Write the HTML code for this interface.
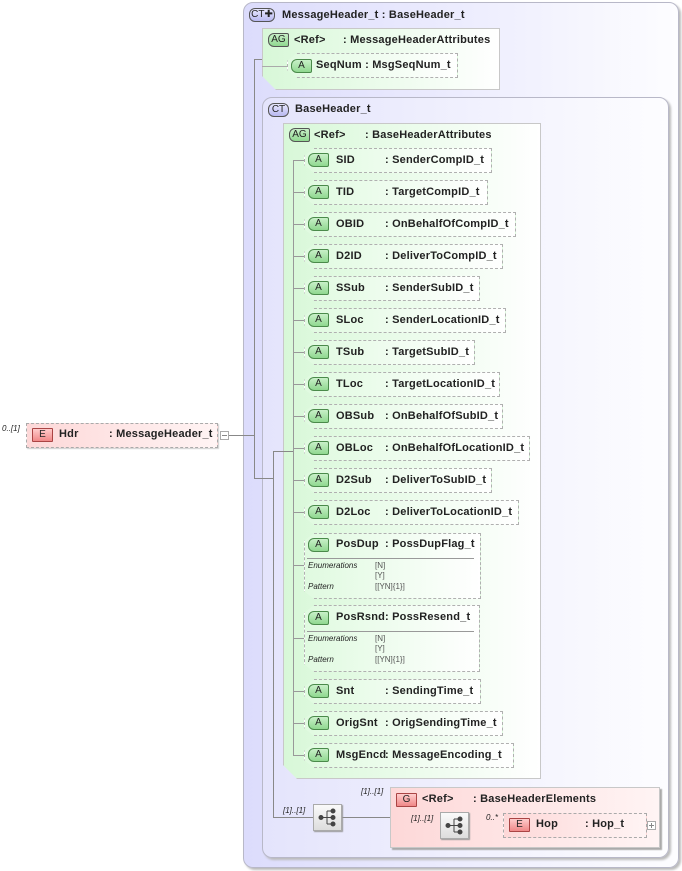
<!DOCTYPE html>
<html><head><meta charset="utf-8"><style>
*{margin:0;padding:0;box-sizing:border-box}
body{width:682px;height:871px;background:#fff;position:relative;overflow:hidden;font-family:"Liberation Sans",sans-serif;font-size:11px;font-weight:bold;color:#222}
.a{position:absolute}
.ct{position:absolute;border:1px solid #b8b8c8;border-radius:10px;box-shadow:2px 2px 2px #bbb}
.ag{position:absolute;border:1px solid #c8c8c8;background:linear-gradient(90deg,#d8f8d8,#fff);clip-path:polygon(0 0,100% 0,100% 100%,14px 100%,0 calc(100% - 14px));box-shadow:2px 2px 1px #aaa}
.at{position:absolute;height:25px;border:1px dashed #b0b0b0;background:linear-gradient(90deg,#e0fae0,#fff);clip-path:polygon(10px 0,100% 0,100% 100%,10px 100%,0 calc(100% - 8px),0 8px)}
.badge{position:absolute;height:14px;border:1px solid #4a8a4a;background:linear-gradient(#c8f0c8,#90d890);font-size:10px;font-weight:normal;text-align:center;line-height:12px;border-radius:6px 2px 2px 6px;color:#222}
.ln{position:absolute;background:#888}
.t{position:absolute;white-space:nowrap;margin-top:1px;letter-spacing:0.2px}
.sm{position:absolute;font-size:8px;font-style:italic;font-weight:normal;color:#222;white-space:nowrap}
.sq{position:absolute;width:29px;height:27px;border:1px solid #aaa;background:linear-gradient(#fafafa,#ddd);box-shadow:1px 1px 1px #999}
</style></head><body>

<div class="ct" style="left:243px;top:2px;width:436px;height:866px;background:linear-gradient(90deg,#dcdcfc,#fdfdff)"></div>
<div class="badge" style="left:249px;top:8px;width:26px;border-color:#555;background:linear-gradient(#e8e8ff,#b8b8f0);border-radius:6px">CT✚</div>
<div class="t" style="left:282px;top:8px">MessageHeader_t : BaseHeader_t</div>

<div class="ag" style="left:262px;top:28px;width:238px;height:62px"></div>
<div class="badge" style="left:268px;top:33px;width:21px;border-color:#555">AG</div>
<div class="t" style="left:294px;top:33px">&lt;Ref&gt;</div>
<div class="t" style="left:343px;top:33px">: MessageHeaderAttributes</div>
<div class="at" style="left:287px;top:53px;width:171px"></div>
<div class="badge" style="left:291px;top:59px;width:21px">A</div>
<div class="t" style="left:316px;top:58px">SeqNum : MsgSeqNum_t</div>

<div class="ct" style="left:262px;top:97px;width:407px;height:761px;background:linear-gradient(90deg,#e4e4fc,#fdfdff)"></div>
<div class="badge" style="left:268px;top:103px;width:21px;border-color:#555;background:linear-gradient(#e8e8ff,#b8b8f0);border-radius:6px">CT</div>
<div class="t" style="left:295px;top:102px">BaseHeader_t</div>

<div class="ag" style="left:283px;top:123px;width:258px;height:656px"></div>
<div class="badge" style="left:289px;top:128px;width:21px;border-color:#555">AG</div>
<div class="t" style="left:314px;top:128px">&lt;Ref&gt;</div>
<div class="t" style="left:365px;top:128px">: BaseHeaderAttributes</div>

<div class="ln" style="left:226px;top:435px;width:28px;height:1px"></div>
<div class="ln" style="left:254px;top:59px;width:1px;height:420px"></div>
<div class="ln" style="left:254px;top:59px;width:8px;height:1px"></div>
<div class="ln" style="left:262px;top:66px;width:25px;height:1px;background:#aaa"></div>
<div class="ln" style="left:254px;top:478px;width:20px;height:1px"></div>
<div class="ln" style="left:273px;top:451px;width:1px;height:367px"></div>
<div class="ln" style="left:273px;top:451px;width:20px;height:1px"></div>
<div class="ln" style="left:293px;top:160px;width:1px;height:595px;background:#999"></div>
<div class="ln" style="left:273px;top:817px;width:40px;height:1px"></div>
<div class="ln" style="left:342px;top:817px;width:48px;height:1px"></div>
<div class="ln" style="left:390px;top:825px;width:50px;height:1px"></div>
<div class="ln" style="left:469px;top:825px;width:34px;height:1px"></div>

<div class="ln" style="left:293px;top:160px;width:11px;height:1px;background:#999"></div>
<div class="at" style="left:304px;top:148px;width:188px"></div><div class="badge" style="left:308px;top:153px;width:21px">A</div><div class="t" style="left:336px;top:153px">SID</div><div class="t" style="left:385px;top:153px">: SenderCompID_t</div>
<div class="ln" style="left:293px;top:192px;width:11px;height:1px;background:#999"></div>
<div class="at" style="left:304px;top:180px;width:184px"></div><div class="badge" style="left:308px;top:185px;width:21px">A</div><div class="t" style="left:336px;top:185px">TID</div><div class="t" style="left:385px;top:185px">: TargetCompID_t</div>
<div class="ln" style="left:293px;top:224px;width:11px;height:1px;background:#999"></div>
<div class="at" style="left:304px;top:212px;width:212px"></div><div class="badge" style="left:308px;top:217px;width:21px">A</div><div class="t" style="left:336px;top:217px">OBID</div><div class="t" style="left:385px;top:217px">: OnBehalfOfCompID_t</div>
<div class="ln" style="left:293px;top:256px;width:11px;height:1px;background:#999"></div>
<div class="at" style="left:304px;top:244px;width:199px"></div><div class="badge" style="left:308px;top:249px;width:21px">A</div><div class="t" style="left:336px;top:249px">D2ID</div><div class="t" style="left:385px;top:249px">: DeliverToCompID_t</div>
<div class="ln" style="left:293px;top:288px;width:11px;height:1px;background:#999"></div>
<div class="at" style="left:304px;top:276px;width:176px"></div><div class="badge" style="left:308px;top:281px;width:21px">A</div><div class="t" style="left:336px;top:281px">SSub</div><div class="t" style="left:385px;top:281px">: SenderSubID_t</div>
<div class="ln" style="left:293px;top:320px;width:11px;height:1px;background:#999"></div>
<div class="at" style="left:304px;top:308px;width:202px"></div><div class="badge" style="left:308px;top:313px;width:21px">A</div><div class="t" style="left:336px;top:313px">SLoc</div><div class="t" style="left:385px;top:313px">: SenderLocationID_t</div>
<div class="ln" style="left:293px;top:352px;width:11px;height:1px;background:#999"></div>
<div class="at" style="left:304px;top:340px;width:171px"></div><div class="badge" style="left:308px;top:345px;width:21px">A</div><div class="t" style="left:336px;top:345px">TSub</div><div class="t" style="left:385px;top:345px">: TargetSubID_t</div>
<div class="ln" style="left:293px;top:384px;width:11px;height:1px;background:#999"></div>
<div class="at" style="left:304px;top:372px;width:196px"></div><div class="badge" style="left:308px;top:377px;width:21px">A</div><div class="t" style="left:336px;top:377px">TLoc</div><div class="t" style="left:385px;top:377px">: TargetLocationID_t</div>
<div class="ln" style="left:293px;top:416px;width:11px;height:1px;background:#999"></div>
<div class="at" style="left:304px;top:404px;width:199px"></div><div class="badge" style="left:308px;top:409px;width:21px">A</div><div class="t" style="left:336px;top:409px">OBSub</div><div class="t" style="left:385px;top:409px">: OnBehalfOfSubID_t</div>
<div class="ln" style="left:293px;top:448px;width:11px;height:1px;background:#999"></div>
<div class="at" style="left:304px;top:436px;width:226px"></div><div class="badge" style="left:308px;top:441px;width:21px">A</div><div class="t" style="left:336px;top:441px">OBLoc</div><div class="t" style="left:385px;top:441px">: OnBehalfOfLocationID_t</div>
<div class="ln" style="left:293px;top:480px;width:11px;height:1px;background:#999"></div>
<div class="at" style="left:304px;top:468px;width:188px"></div><div class="badge" style="left:308px;top:473px;width:21px">A</div><div class="t" style="left:336px;top:473px">D2Sub</div><div class="t" style="left:385px;top:473px">: DeliverToSubID_t</div>
<div class="ln" style="left:293px;top:512px;width:11px;height:1px;background:#999"></div>
<div class="at" style="left:304px;top:500px;width:215px"></div><div class="badge" style="left:308px;top:505px;width:21px">A</div><div class="t" style="left:336px;top:505px">D2Loc</div><div class="t" style="left:385px;top:505px">: DeliverToLocationID_t</div>

<div class="ln" style="left:293px;top:565px;width:11px;height:1px;background:#999"></div>
<div class="at" style="left:304px;top:533px;width:177px;height:66px"></div><div class="badge" style="left:308px;top:538px;width:21px">A</div><div class="t" style="left:336px;top:537px">PosDup</div><div class="t" style="left:385px;top:537px">: PossDupFlag_t</div>
<div class="ln" style="left:307px;top:558px;width:167px;height:1px;background:#999"></div>
<div class="sm" style="left:308px;top:561px">Enumerations</div><div class="sm" style="left:375px;top:561px;color:#555;font-style:normal">[N]</div>
<div class="sm" style="left:375px;top:571px;color:#555;font-style:normal">[Y]</div>
<div class="sm" style="left:308px;top:582px">Pattern</div><div class="sm" style="left:375px;top:582px;color:#555;font-style:normal">[[YN]{1}]</div>

<div class="ln" style="left:293px;top:638px;width:11px;height:1px;background:#999"></div>
<div class="at" style="left:304px;top:605px;width:176px;height:67px"></div><div class="badge" style="left:308px;top:611px;width:21px">A</div><div class="t" style="left:336px;top:610px">PosRsnd</div><div class="t" style="left:385px;top:610px">: PossResend_t</div>
<div class="ln" style="left:307px;top:631px;width:167px;height:1px;background:#999"></div>
<div class="sm" style="left:308px;top:634px">Enumerations</div><div class="sm" style="left:375px;top:634px;color:#555;font-style:normal">[N]</div>
<div class="sm" style="left:375px;top:644px;color:#555;font-style:normal">[Y]</div>
<div class="sm" style="left:308px;top:655px">Pattern</div><div class="sm" style="left:375px;top:655px;color:#555;font-style:normal">[[YN]{1}]</div>

<div class="ln" style="left:293px;top:691px;width:11px;height:1px;background:#999"></div>
<div class="at" style="left:304px;top:679px;width:177px"></div><div class="badge" style="left:308px;top:684px;width:21px">A</div><div class="t" style="left:336px;top:684px">Snt</div><div class="t" style="left:385px;top:684px">: SendingTime_t</div>
<div class="ln" style="left:293px;top:723px;width:11px;height:1px;background:#999"></div>
<div class="at" style="left:304px;top:711px;width:199px"></div><div class="badge" style="left:308px;top:716px;width:21px">A</div><div class="t" style="left:336px;top:716px">OrigSnt</div><div class="t" style="left:385px;top:716px">: OrigSendingTime_t</div>
<div class="ln" style="left:293px;top:755px;width:11px;height:1px;background:#999"></div>
<div class="at" style="left:304px;top:743px;width:210px"></div><div class="badge" style="left:308px;top:748px;width:21px">A</div><div class="t" style="left:336px;top:748px">MsgEncd</div><div class="t" style="left:385px;top:748px">: MessageEncoding_t</div>

<div class="sm" style="left:2px;top:424px">0..[1]</div>
<div class="a" style="left:26px;top:423px;width:192px;height:25px;border:1px dashed #aaa;background:linear-gradient(90deg,#fdd8d8,#fff4f4);box-shadow:1px 1px 1px #ccc"></div>
<div class="badge" style="left:32px;top:428px;width:21px;border-radius:1px;border-color:#a44;background:linear-gradient(#fcc,#f08888)">E</div>
<div class="t" style="left:59px;top:427px">Hdr</div>
<div class="t" style="left:109px;top:427px">: MessageHeader_t</div>
<div class="a" style="left:220px;top:431px;width:9px;height:9px;border:1px solid #aaa;background:#fff"><div style="position:absolute;left:1px;top:3px;width:5px;height:1px;background:#888"></div></div>

<div class="sm" style="left:283px;top:806px">[1]..[1]</div>
<div class="sq" style="left:313px;top:804px"></div>
<svg class="a" style="left:313px;top:804px" width="29" height="27"><g fill="#444" stroke="#444"><circle cx="8" cy="13.5" r="2"/><line x1="8" y1="13.5" x2="14" y2="13.5"/><line x1="14" y1="7" x2="14" y2="20"/><line x1="14" y1="7" x2="19" y2="7"/><line x1="14" y1="13.5" x2="19" y2="13.5"/><line x1="14" y1="20" x2="19" y2="20"/><circle cx="20" cy="7" r="2"/><circle cx="20" cy="13.5" r="2"/><circle cx="20" cy="20" r="2"/></g></svg>

<div class="sm" style="left:361px;top:787px">[1]..[1]</div>
<div class="a" style="left:390px;top:787px;width:270px;height:61px;border:1px solid #c8c8c8;background:linear-gradient(90deg,#fdd8d8,#fff4f4);box-shadow:2px 2px 1px #aaa"></div>
<div class="badge" style="left:396px;top:793px;width:21px;border-radius:1px;border-color:#a44;background:linear-gradient(#fcc,#f08888)">G</div>
<div class="t" style="left:422px;top:792px">&lt;Ref&gt;</div>
<div class="t" style="left:473px;top:792px">: BaseHeaderElements</div>
<div class="sm" style="left:411px;top:814px">[1]..[1]</div>
<div class="sq" style="left:440px;top:812px"></div>
<svg class="a" style="left:440px;top:812px" width="29" height="27"><g fill="#444" stroke="#444"><circle cx="8" cy="13.5" r="2"/><line x1="8" y1="13.5" x2="14" y2="13.5"/><line x1="14" y1="7" x2="14" y2="20"/><line x1="14" y1="7" x2="19" y2="7"/><line x1="14" y1="13.5" x2="19" y2="13.5"/><line x1="14" y1="20" x2="19" y2="20"/><circle cx="20" cy="7" r="2"/><circle cx="20" cy="13.5" r="2"/><circle cx="20" cy="20" r="2"/></g></svg>
<div class="sm" style="left:486px;top:813px">0..*</div>
<div class="a" style="left:503px;top:813px;width:144px;height:25px;border:1px dashed #aaa;background:linear-gradient(90deg,#fdd8d8,#fff4f4)"></div>
<div class="badge" style="left:509px;top:818px;width:21px;border-radius:1px;border-color:#a44;background:linear-gradient(#fcc,#f08888)">E</div>
<div class="t" style="left:536px;top:817px">Hop</div>
<div class="t" style="left:585px;top:817px">: Hop_t</div>
<div class="a" style="left:647px;top:821px;width:9px;height:9px;border:1px solid #aaa;background:#fff"><div style="position:absolute;left:1px;top:3px;width:5px;height:1px;background:#888"></div><div style="position:absolute;left:3px;top:1px;width:1px;height:5px;background:#888"></div></div>

</body></html>
